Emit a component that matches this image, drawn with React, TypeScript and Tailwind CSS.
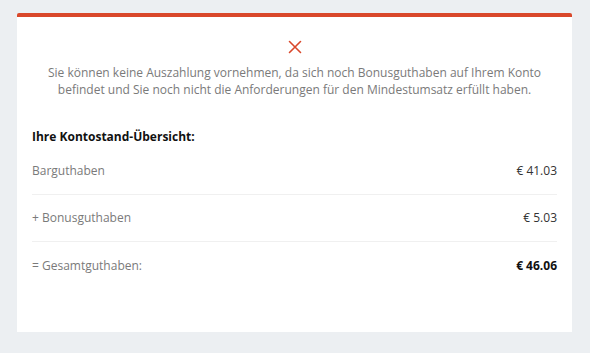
import React from "react";

export default function App() {
  const rows = [
    { label: "Barguthaben", value: "€ 41.03", bold: false },
    { label: "+ Bonusguthaben", value: "€ 5.03", bold: false },
    { label: "= Gesamtguthaben:", value: "€ 46.06", bold: true },
  ];
  return (
    <div
      className="w-[590px] h-[353px] bg-[#eceff2] pt-[13px] px-[17px] overflow-hidden"
      style={{ fontFamily: '"Open Sans", "Noto Sans", sans-serif' }}
    >
      <div className="w-[555px] h-[319px] bg-white border-t-4 border-[#d9482b] rounded-t-[2px] flex flex-col">
        <div className="flex justify-center mt-[23px]">
          <svg width="14" height="14" viewBox="0 0 14 14" fill="none">
            <path d="M1.5 1.5 L12.5 12.5 M12.5 1.5 L1.5 12.5" stroke="#d9482b" strokeWidth="1.6" strokeLinecap="round" />
          </svg>
        </div>
        <p className="mt-[10px] text-center text-[12px] leading-[17px] text-[#7a7a7a] px-[10px]">
          Sie können keine Auszahlung vornehmen, da sich noch Bonusguthaben auf Ihrem Konto
          <br />
          befindet und Sie noch nicht die Anforderungen für den Mindestumsatz erfüllt haben.
        </p>
        <div className="px-[15px] mt-[30px]">
          <h3 className="text-[12px] leading-[18px] font-bold text-[#111]">Ihre Kontostand-Übersicht:</h3>
          <div className="mt-[2px]">
            {rows.map((r, i) => (
              <div
                key={r.label}
                className={
                  "h-[47px] flex items-center justify-between text-[12px] " +
                  (i < rows.length - 1 ? "border-b border-[#f0f0f0]" : "")
                }
              >
                <span className="text-[#7a7a7a]">{r.label}</span>
                <span className={r.bold ? "font-bold text-[#111]" : "text-[#333]"}>{r.value}</span>
              </div>
            ))}
          </div>
        </div>
      </div>
    </div>
  );
}
